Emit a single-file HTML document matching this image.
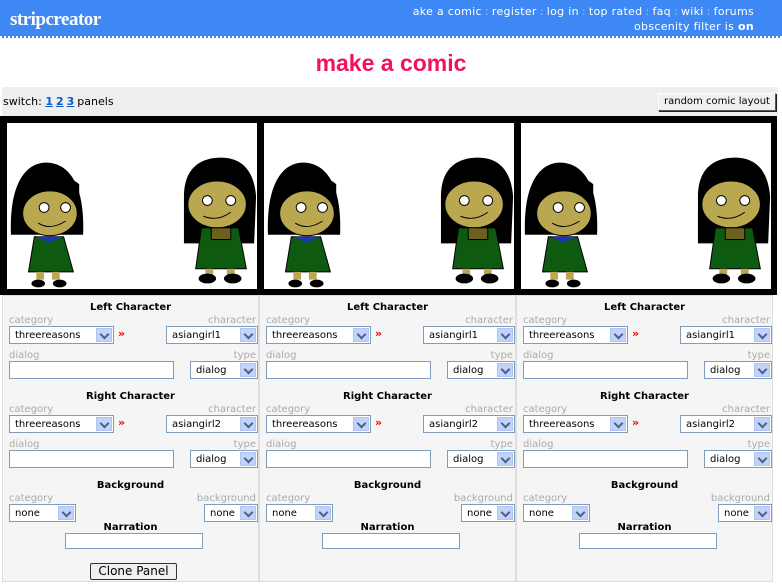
<!DOCTYPE html>
<html><head><meta charset="utf-8"><style>
*{margin:0;padding:0;box-sizing:border-box}
body{width:782px;height:584px;background:#fff;font-family:"DejaVu Sans","Liberation Sans",sans-serif;position:relative;overflow:hidden}
.hdr{position:absolute;left:0;top:0;width:782px;height:38px;background:#3d88f5;border-bottom:2px dotted #fff}
.logo{position:absolute;left:10px;top:9px;color:#fff;font-family:"Liberation Serif",serif;font-size:19px;font-weight:bold;letter-spacing:-0.5px}
.nav{position:absolute;right:28px;top:4px;color:#fff;font-size:11px;text-align:right;line-height:15px;letter-spacing:0.3px}
.nav i{font-style:normal;color:#9cc2fb;margin:0 3px}
h1{position:absolute;left:0;width:782px;top:50px;text-align:center;color:#f0115f;font-family:"Liberation Sans",sans-serif;font-size:23px;font-weight:bold}
.sw{position:absolute;left:2px;top:87px;width:776px;height:29px;background:#eee;font-size:11px}
.sw span{position:absolute;left:1px;top:8px}
.sw a{color:#0a5bd0;font-weight:bold;text-decoration:underline;margin-right:3px}
.btn{position:absolute;background:#f0f0f0;border:1px solid #fff;border-right-color:#555;border-bottom-color:#555;box-shadow:1px 1px 0 #222;font-size:11px;text-align:center;white-space:nowrap}
.strip{position:absolute;left:0;top:116px;width:777px;height:179px;background:#000}
.pan{position:absolute;top:7px;width:250px;height:166px;background:#fff;overflow:hidden}
.col{position:absolute;top:295px;width:257px;height:287px;background:#f5f5f5;border:1px solid #ddd;font-size:10px}
.col *{position:absolute}
.t{font-weight:bold;font-size:10px;color:#000;width:100%;text-align:center;left:0}
.l{color:#aaa;font-size:10px}
.s{height:18px;border:1px solid #7f9db9;background:#fff;font-size:10px;padding:3px 0 0 5px;color:#000}
.s b{position:absolute;right:1px;top:1px;width:16px;height:14px;background:#c1d3fb;border:1px solid #b0c4ee}
.s b:after{content:"";position:absolute;left:4px;top:2px;width:5px;height:5px;border-right:2px solid #4d6185;border-bottom:2px solid #4d6185;transform:rotate(45deg)}
.i{height:18px;border:1px solid #7f9db9;background:#fff}
.ar{color:#e00;font-weight:bold;font-size:11px}
</style></head><body>
<svg width="0" height="0" style="position:absolute"><defs>
<symbol id="g1" viewBox="0 0 80 130">
<path d="M2,74 C0,20 18,0 38,0 C60,0 78,20 76,74 Z" fill="#000"/>
<ellipse cx="42" cy="52" rx="28" ry="23" fill="#b9a850" stroke="#000"/>
<path d="M14,34 C30,26 55,26 72,34 L72,22 C55,8 25,8 14,22Z" fill="#000"/>
<circle cx="36" cy="46" r="5" fill="#fff" stroke="#000"/><circle cx="58" cy="46" r="5" fill="#fff" stroke="#000"/>
<path d="M30,62 Q42,70 58,60" stroke="#000" fill="none"/>
<path d="M26,76 L56,76 L66,112 L20,112Z" fill="#0e5a10" stroke="#000"/>
<path d="M28,76 L42,82 L54,76" fill="#2233bb"/>
<rect x="28" y="112" width="8" height="8" fill="#b9a850"/><rect x="44" y="112" width="8" height="8" fill="#b9a850"/>
<ellipse cx="30" cy="124" rx="7" ry="4" fill="#000"/><ellipse cx="52" cy="124" rx="7" ry="4" fill="#000"/>
</symbol>
<symbol id="g2" viewBox="0 0 80 130">
<path d="M2,40 C2,8 22,0 40,0 C62,0 74,14 76,40 L74,88 L2,88Z" fill="#000"/>
<ellipse cx="36" cy="48" rx="30" ry="24" fill="#b9a850" stroke="#000"/>
<path d="M8,32 C26,22 50,20 68,28 L68,18 C50,8 24,8 8,20Z" fill="#000"/>
<circle cx="26" cy="44" r="5" fill="#fff" stroke="#000"/><circle cx="50" cy="44" r="5" fill="#fff" stroke="#000"/>
<path d="M22,60 Q36,66 50,56" stroke="#000" fill="none"/>
<path d="M20,72 L58,72 L66,114 L14,114Z" fill="#0e5a10" stroke="#000"/>
<rect x="30" y="72" width="20" height="12" fill="#6b6020" stroke="#000"/>
<rect x="24" y="114" width="8" height="6" fill="#b9a850"/><rect x="46" y="114" width="8" height="6" fill="#b9a850"/>
<ellipse cx="26" cy="124" rx="9" ry="5" fill="#000"/><ellipse cx="52" cy="124" rx="9" ry="5" fill="#000"/>
</symbol></defs></svg>
<div class="hdr"><div class="logo">stripcreator</div>
<div class="nav">ake a comic<i>:</i>register<i>:</i>log in<i>:</i>top rated<i>:</i>faq<i>:</i>wiki<i>:</i>forums<br>obscenity filter is <b>on</b></div></div>
<h1>make a comic</h1>
<div class="sw"><span>switch: <a>1</a><a>2</a><a>3</a>panels</span>
<div class="btn" style="right:2px;top:6px;width:118px;height:18px;padding-top:2px;font-size:10px">random comic layout</div></div>
<div class="strip">
<div class="pan" style="left:7px"><svg style="position:absolute;left:2px;top:38px" width="78" height="130"><use href="#g1"/></svg><svg style="position:absolute;left:175px;top:28px" width="78" height="140"><use href="#g2"/></svg></div>
<div class="pan" style="left:264px"><svg style="position:absolute;left:2px;top:38px" width="78" height="130"><use href="#g1"/></svg><svg style="position:absolute;left:175px;top:28px" width="78" height="140"><use href="#g2"/></svg></div>
<div class="pan" style="left:521px"><svg style="position:absolute;left:2px;top:38px" width="78" height="130"><use href="#g1"/></svg><svg style="position:absolute;left:175px;top:28px" width="78" height="140"><use href="#g2"/></svg></div>
</div>
<div class="col" style="left:2px">
<div class="t" style="top:6px">Left Character</div>
<div class="l" style="left:6px;top:19px">category</div><div class="l" style="right:2px;top:19px">character</div>
<div class="s" style="left:6px;top:30px;width:105px">threereasons<b></b></div><div class="ar" style="left:115px;top:31px">»</div>
<div class="s" style="left:163px;top:30px;width:92px">asiangirl1<b></b></div>
<div class="l" style="left:6px;top:54px">dialog</div><div class="l" style="right:2px;top:54px">type</div>
<div class="i" style="left:6px;top:65px;width:165px"></div>
<div class="s" style="left:187px;top:65px;width:68px">dialog<b></b></div>
<div class="t" style="top:95px">Right Character</div>
<div class="l" style="left:6px;top:108px">category</div><div class="l" style="right:2px;top:108px">character</div>
<div class="s" style="left:6px;top:119px;width:105px">threereasons<b></b></div><div class="ar" style="left:115px;top:120px">»</div>
<div class="s" style="left:163px;top:119px;width:92px">asiangirl2<b></b></div>
<div class="l" style="left:6px;top:143px">dialog</div><div class="l" style="right:2px;top:143px">type</div>
<div class="i" style="left:6px;top:154px;width:165px"></div>
<div class="s" style="left:187px;top:154px;width:68px">dialog<b></b></div>
<div class="t" style="top:184px">Background</div>
<div class="l" style="left:6px;top:197px">category</div><div class="l" style="right:2px;top:197px">background</div>
<div class="s" style="left:6px;top:208px;width:67px">none<b></b></div>
<div class="s" style="left:201px;top:208px;width:54px">none<b></b></div>
<div class="t" style="top:226px">Narration</div>
<div class="i" style="left:62px;top:237px;width:138px;height:16px"></div>
<div class="btn" style="left:87px;top:267px;width:87px;height:17px;font-size:12px;border:1px solid #333;border-radius:2px;box-shadow:none">Clone Panel</div>
</div>
<div class="col" style="left:259px">
<div class="t" style="top:6px">Left Character</div>
<div class="l" style="left:6px;top:19px">category</div><div class="l" style="right:2px;top:19px">character</div>
<div class="s" style="left:6px;top:30px;width:105px">threereasons<b></b></div><div class="ar" style="left:115px;top:31px">»</div>
<div class="s" style="left:163px;top:30px;width:92px">asiangirl1<b></b></div>
<div class="l" style="left:6px;top:54px">dialog</div><div class="l" style="right:2px;top:54px">type</div>
<div class="i" style="left:6px;top:65px;width:165px"></div>
<div class="s" style="left:187px;top:65px;width:68px">dialog<b></b></div>
<div class="t" style="top:95px">Right Character</div>
<div class="l" style="left:6px;top:108px">category</div><div class="l" style="right:2px;top:108px">character</div>
<div class="s" style="left:6px;top:119px;width:105px">threereasons<b></b></div><div class="ar" style="left:115px;top:120px">»</div>
<div class="s" style="left:163px;top:119px;width:92px">asiangirl2<b></b></div>
<div class="l" style="left:6px;top:143px">dialog</div><div class="l" style="right:2px;top:143px">type</div>
<div class="i" style="left:6px;top:154px;width:165px"></div>
<div class="s" style="left:187px;top:154px;width:68px">dialog<b></b></div>
<div class="t" style="top:184px">Background</div>
<div class="l" style="left:6px;top:197px">category</div><div class="l" style="right:2px;top:197px">background</div>
<div class="s" style="left:6px;top:208px;width:67px">none<b></b></div>
<div class="s" style="left:201px;top:208px;width:54px">none<b></b></div>
<div class="t" style="top:226px">Narration</div>
<div class="i" style="left:62px;top:237px;width:138px;height:16px"></div>
</div>
<div class="col" style="left:516px">
<div class="t" style="top:6px">Left Character</div>
<div class="l" style="left:6px;top:19px">category</div><div class="l" style="right:2px;top:19px">character</div>
<div class="s" style="left:6px;top:30px;width:105px">threereasons<b></b></div><div class="ar" style="left:115px;top:31px">»</div>
<div class="s" style="left:163px;top:30px;width:92px">asiangirl1<b></b></div>
<div class="l" style="left:6px;top:54px">dialog</div><div class="l" style="right:2px;top:54px">type</div>
<div class="i" style="left:6px;top:65px;width:165px"></div>
<div class="s" style="left:187px;top:65px;width:68px">dialog<b></b></div>
<div class="t" style="top:95px">Right Character</div>
<div class="l" style="left:6px;top:108px">category</div><div class="l" style="right:2px;top:108px">character</div>
<div class="s" style="left:6px;top:119px;width:105px">threereasons<b></b></div><div class="ar" style="left:115px;top:120px">»</div>
<div class="s" style="left:163px;top:119px;width:92px">asiangirl2<b></b></div>
<div class="l" style="left:6px;top:143px">dialog</div><div class="l" style="right:2px;top:143px">type</div>
<div class="i" style="left:6px;top:154px;width:165px"></div>
<div class="s" style="left:187px;top:154px;width:68px">dialog<b></b></div>
<div class="t" style="top:184px">Background</div>
<div class="l" style="left:6px;top:197px">category</div><div class="l" style="right:2px;top:197px">background</div>
<div class="s" style="left:6px;top:208px;width:67px">none<b></b></div>
<div class="s" style="left:201px;top:208px;width:54px">none<b></b></div>
<div class="t" style="top:226px">Narration</div>
<div class="i" style="left:62px;top:237px;width:138px;height:16px"></div>
</div>
</body></html>
